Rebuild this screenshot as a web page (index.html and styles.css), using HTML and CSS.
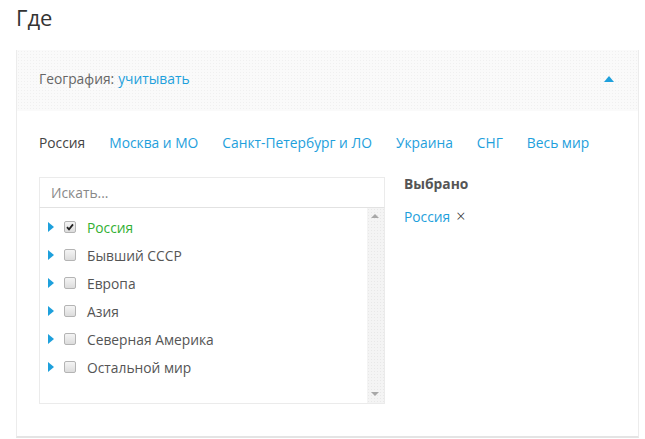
FILE: index.html
```html
<!DOCTYPE html>
<html lang="ru">
<head>
  <meta charset="UTF-8">
  <title>Где</title>
  <link rel="stylesheet" href="styles.css">
</head>
<body>
  <h1 class="title">Где</h1>

  <div class="panel">
    <div class="panel-head">
      <span class="label">География:</span>
      <a class="link" href="#">учитывать</a>
      <span class="toggle"></span>
    </div>

    <div class="panel-body">
      <div class="tabs">
        <span class="tab active">Россия</span>
        <a class="tab" href="#">Москва и МО</a>
        <a class="tab" href="#">Санкт-Петербург и ЛО</a>
        <a class="tab" href="#">Украина</a>
        <a class="tab" href="#">СНГ</a>
        <a class="tab" href="#">Весь мир</a>
      </div>

      <div class="columns">
        <div class="tree">
          <input class="search" type="text" placeholder="Искать...">
          <div class="tree-box">
            <ul class="tree-list">
              <li class="item checked"><span class="arrow"></span><span class="box"><svg viewBox="0 0 12 12" width="12" height="12"><path d="M3 6.2 L5 8.4 L9 3.4" fill="none" stroke="#222" stroke-width="1.8"/></svg></span>Россия</li>
              <li class="item"><span class="arrow"></span><span class="box"></span>Бывший СССР</li>
              <li class="item"><span class="arrow"></span><span class="box"></span>Европа</li>
              <li class="item"><span class="arrow"></span><span class="box"></span>Азия</li>
              <li class="item"><span class="arrow"></span><span class="box"></span>Северная Америка</li>
              <li class="item"><span class="arrow"></span><span class="box"></span>Остальной мир</li>
            </ul>
            <div class="scrollbar">
              <span class="sb-up"></span>
              <span class="sb-down"></span>
            </div>
          </div>
        </div>

        <div class="selected">
          <h3 class="selected-title">Выбрано</h3>
          <div class="chip"><a class="link" href="#">Россия</a><span class="remove">×</span></div>
        </div>
      </div>
    </div>
  </div>
</body>
</html>
```

FILE: styles.css
```css
body {
  margin: 0;
  padding: 0 6px 0 16px;
  font-family: "Open Sans", Arial, sans-serif;
  font-size: 13.8px;
  color: #555555;
  background: #ffffff;
}
a {
  text-decoration: none;
}
.link {
  color: #1ea0dc;
}

.title {
  margin: 0;
  padding-top: 2px;
  height: 48px;
  font-size: 22px;
  font-weight: 400;
  color: #333333;
  line-height: 30px;
}

.panel {
  height: 388px;
  border-left: 1px solid #ececec;
  border-right: 1px solid #ececec;
  border-bottom: 2px solid #e4e4e4;
  box-sizing: border-box;
}
.panel-head {
  display: flex;
  align-items: center;
  height: 61px;
  box-sizing: border-box;
  padding: 0 24px 4px 22px;
  background-color: #fafafa;
  background-image: radial-gradient(#f0f0f0 0.6px, transparent 0.8px);
  background-size: 3px 3px;
}
.label {
  margin-right: 4px;
  color: #666666;
}
.toggle {
  margin-left: auto;
  width: 0;
  height: 0;
  border-left: 5px solid transparent;
  border-right: 5px solid transparent;
  border-bottom: 6px solid #1ea0dc;
}

.panel-body {
  padding: 20px 22px 0;
}
.tabs {
  display: flex;
  gap: 24px;
  line-height: 24px;
}
.tab {
  color: #1ea0dc;
}
.tab.active {
  color: #444444;
}

.columns {
  display: flex;
  margin-top: 22px;
}
.tree {
  width: 346px;
}
.search {
  display: block;
  width: 100%;
  height: 31px;
  box-sizing: border-box;
  margin: 0;
  padding: 0 11px;
  border: 1px solid #ebebeb;
  border-bottom-color: #e2e2e2;
  font-family: inherit;
  font-size: 13.8px;
  color: #555555;
  outline: none;
}
.search::placeholder {
  color: #888888;
}
.tree-box {
  display: flex;
  height: 196px;
  border: 1px solid #ebebeb;
  border-top: none;
  box-sizing: border-box;
}
.tree-list {
  flex: 1;
  list-style: none;
  margin: 0;
  padding: 5px 0 0 8px;
}
.item {
  display: flex;
  align-items: center;
  height: 28px;
  color: #555555;
}
.item.checked {
  color: #33b033;
}
.arrow {
  width: 0;
  height: 0;
  margin-right: 10px;
  border-top: 5px solid transparent;
  border-bottom: 5px solid transparent;
  border-left: 6px solid #1ea0dc;
}
.box {
  width: 10px;
  height: 10px;
  margin-right: 11px;
  border: 1px solid #b4b4b4;
  border-radius: 2px;
  background: linear-gradient(#f4f4f4, #dcdcdc);
  position: relative;
}
.box svg {
  position: absolute;
  left: -1px;
  top: -1px;
}
.scrollbar {
  position: relative;
  width: 17px;
  background-color: #f4f4f4;
  background-image: radial-gradient(#e8e8e8 0.6px, transparent 0.8px);
  background-size: 3px 3px;
}
.sb-up, .sb-down {
  position: absolute;
  left: 4px;
  width: 0;
  height: 0;
  border-left: 4px solid transparent;
  border-right: 4px solid transparent;
}
.sb-up {
  top: 6px;
  border-bottom: 4px solid #a8a8a8;
}
.sb-down {
  bottom: 7px;
  border-top: 4px solid #a8a8a8;
}

.selected {
  margin-left: 19px;
  margin-top: -2px;
}
.selected-title {
  margin: 0;
  font-size: 13.8px;
  font-weight: 700;
  color: #555555;
  line-height: 18px;
}
.chip {
  margin-top: 14px;
  line-height: 18px;
}
.remove {
  margin-left: 6px;
  color: #222222;
  font-size: 16px;
  font-weight: 300;
}
```
